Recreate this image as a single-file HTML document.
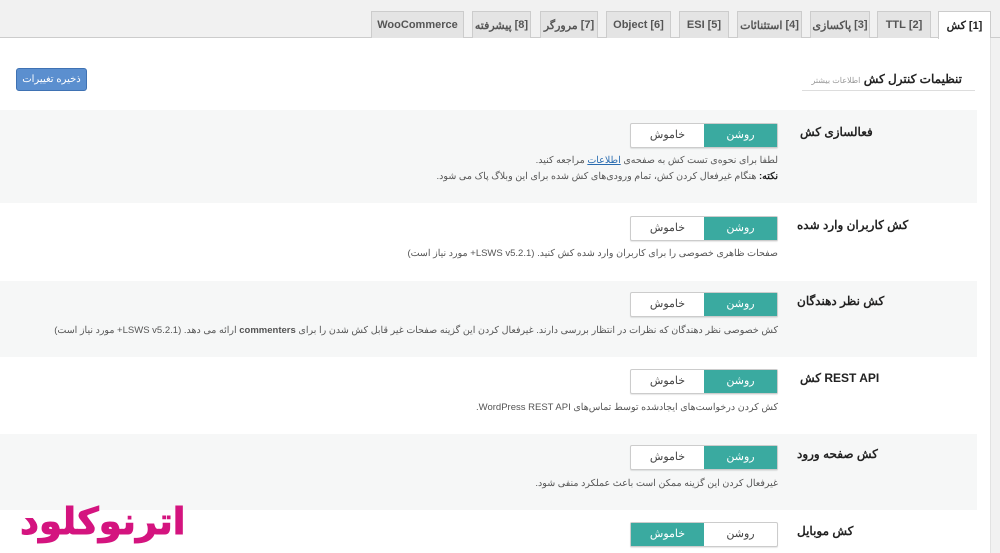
<!DOCTYPE html>
<html><head><meta charset="utf-8">
<style>
*{box-sizing:border-box;margin:0;padding:0}
body{width:1000px;height:553px;overflow:hidden;background:#fff;font-family:"Liberation Sans","Noto Sans CJK SC",sans-serif;position:relative;color:#444}
.top{position:absolute;left:0;top:0;width:1000px;height:38px;background:#f1f1f1;border-bottom:1px solid #ccc}
.tab{position:absolute;top:11px;height:27px;background:#e4e4e4;border:1px solid #ccc;border-bottom:none;font-size:11px;font-weight:bold;color:#555;white-space:nowrap;display:flex;justify-content:center;align-items:center;gap:3px;direction:ltr}
.tab span{unicode-bidi:isolate}
.tab.a{background:#fff;color:#222;height:28px;top:11px}
.strip{position:absolute;left:990px;top:38px;width:10px;height:515px;background:#f1f1f1;border-left:1px solid #e2e2e2}
.row{position:absolute;left:0;width:977px;background:#f6f7f7}
.lbl{position:absolute;left:797px;font-size:12px;font-weight:bold;color:#222;white-space:nowrap}
.tg{position:absolute;left:630px;width:148px;height:25px;border:1px solid #ccc;border-radius:2px;background:#fff;font-size:11px;direction:rtl;box-shadow:0 1px 1px rgba(0,0,0,.1)}
.tg span{position:absolute;top:0;width:73px;height:23px;line-height:23px;text-align:center;color:#444}
.tg .r{right:0}.tg .l{left:0}
.tg .on{background:#3aaaa0;color:#fff}
.d{position:absolute;right:222px;font-size:9.5px;color:#555;direction:rtl;white-space:nowrap;line-height:16px}
</style></head><body>
<div class="top"></div>
<div class="tab a" style="left:938px;width:53px"><span>کش</span><span>[1]</span></div>
<div class="tab" style="left:877px;width:54px"><span>TTL</span><span>[2]</span></div>
<div class="tab" style="left:810px;width:60px"><span>پاکسازی</span><span>[3]</span></div>
<div class="tab" style="left:737px;width:65px"><span>استثنائات</span><span>[4]</span></div>
<div class="tab" style="left:679px;width:50px"><span>ESI</span><span>[5]</span></div>
<div class="tab" style="left:606px;width:65px"><span>Object</span><span>[6]</span></div>
<div class="tab" style="left:540px;width:58px"><span>مرورگر</span><span>[7]</span></div>
<div class="tab" style="left:472px;width:59px"><span>پیشرفته</span><span>[8]</span></div>
<div class="tab" style="left:371px;width:93px"><span>WooCommerce</span></div>
<div class="strip"></div>

<div style="position:absolute;right:38px;top:72px;font-size:12px;font-weight:bold;color:#222;direction:rtl">تنظیمات کنترل کش <span style="font-size:8px;font-weight:normal;color:#999">اطلاعات بیشتر</span></div>
<div style="position:absolute;left:802px;top:90px;width:173px;height:1px;background:#ddd"></div>
<div style="position:absolute;left:16px;top:68px;width:71px;height:23px;background:#5b8fcf;border:1px solid #3f72b3;border-radius:3px;color:#fff;font-size:10px;text-align:center;line-height:21px;direction:rtl">ذخیره تغییرات</div>

<div class="row" style="top:110px;height:93px"></div>
<div class="row" style="top:281px;height:76px"></div>
<div class="row" style="top:434px;height:76px"></div>

<div class="lbl" style="top:125px;left:800px">فعالسازی کش</div>
<div class="tg" style="top:123px"><span class="r on">روشن</span><span class="l">خاموش</span></div>
<div class="d" style="top:153px">لطفا برای نحوه‌ی تست کش به صفحه‌ی <u style="color:#2a6cb0">اطلاعات</u> مراجعه کنید.</div>
<div class="d" style="top:169px"><b style="color:#222">نکته:</b> هنگام غیرفعال کردن کش، تمام ورودی‌های کش شده برای این وبلاگ پاک می شود.</div>

<div class="lbl" style="top:218px">کش کاربران وارد شده</div>
<div class="tg" style="top:216px"><span class="r on">روشن</span><span class="l">خاموش</span></div>
<div class="d" style="top:246px">صفحات ظاهری خصوصی را برای کاربران وارد شده کش کنید. (LSWS v5.2.1+ مورد نیاز است)</div>

<div class="lbl" style="top:294px">کش نظر دهندگان</div>
<div class="tg" style="top:292px"><span class="r on">روشن</span><span class="l">خاموش</span></div>
<div class="d" style="top:323px">کش خصوصی نظر دهندگان که نظرات در انتظار بررسی دارند. غیرفعال کردن این گزینه صفحات غیر قابل کش شدن را برای <b>commenters</b> ارائه می دهد. (LSWS v5.2.1+ مورد نیاز است)</div>

<div class="lbl" style="top:371px;left:800px">کش REST API</div>
<div class="tg" style="top:369px"><span class="r on">روشن</span><span class="l">خاموش</span></div>
<div class="d" style="top:400px">کش کردن درخواست‌های ایجادشده توسط تماس‌های WordPress REST API.</div>

<div class="lbl" style="top:447px">کش صفحه ورود</div>
<div class="tg" style="top:445px"><span class="r on">روشن</span><span class="l">خاموش</span></div>
<div class="d" style="top:476px">غیرفعال کردن این گزینه ممکن است باعث عملکرد منفی شود.</div>

<div class="lbl" style="top:524px">کش موبایل</div>
<div class="tg" style="top:522px"><span class="r">روشن</span><span class="l on">خاموش</span></div>

<div style="position:absolute;left:20px;top:490px;font-size:37px;font-weight:900;color:#d4147f;direction:rtl;line-height:56px;font-family:'Noto Sans CJK SC','DejaVu Sans',sans-serif;-webkit-text-stroke:1px #d4147f">اترنوکلود</div>
</body></html>
